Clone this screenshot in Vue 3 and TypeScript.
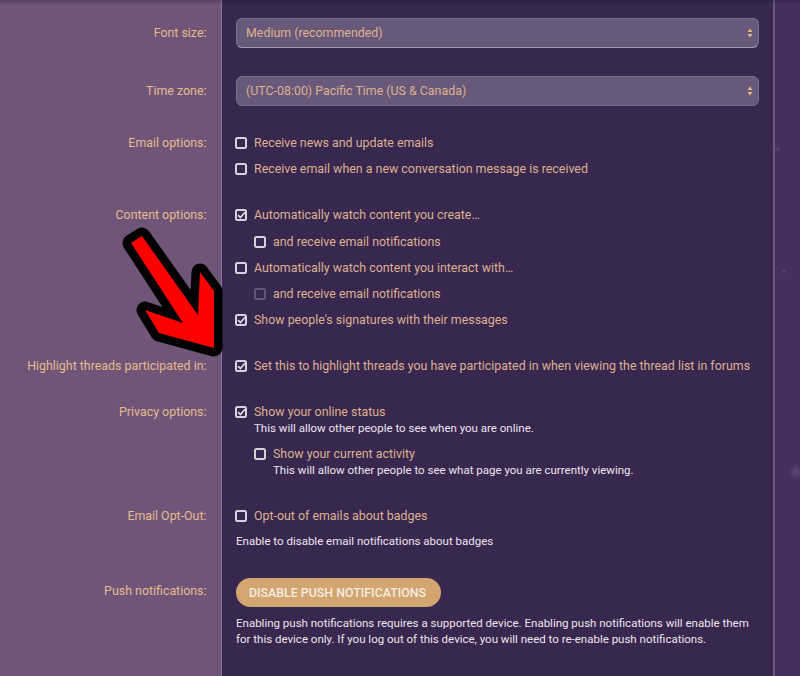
<script setup lang="ts">
interface Choice {
  text: string
  checked?: boolean
  nested?: boolean
  disabled?: boolean
  hint?: string
}
interface Row {
  label: string
  kind: 'select' | 'choices' | 'push'
  value?: string
  choices?: Choice[]
  note?: string
  cls: string
}
const rows: Row[] = [
  { label: 'Font size:', kind: 'select', value: 'Medium (recommended)', cls: 'r-font' },
  { label: 'Time zone:', kind: 'select', value: '(UTC-08:00) Pacific Time (US & Canada)', cls: 'r-zone' },
  {
    label: 'Email options:', kind: 'choices', cls: 'r-email',
    choices: [
      { text: 'Receive news and update emails' },
      { text: 'Receive email when a new conversation message is received' },
    ],
  },
  {
    label: 'Content options:', kind: 'choices', cls: 'r-content',
    choices: [
      { text: 'Automatically watch content you create…', checked: true },
      { text: 'and receive email notifications', nested: true },
      { text: 'Automatically watch content you interact with…' },
      { text: 'and receive email notifications', nested: true, disabled: true },
      { text: "Show people's signatures with their messages", checked: true },
    ],
  },
  {
    label: 'Highlight threads participated in:', kind: 'choices', cls: 'r-high',
    choices: [{ text: 'Set this to highlight threads you have participated in when viewing the thread list in forums', checked: true }],
  },
  {
    label: 'Privacy options:', kind: 'choices', cls: 'r-privacy',
    choices: [
      { text: 'Show your online status', checked: true, hint: 'This will allow other people to see when you are online.' },
      { text: 'Show your current activity', nested: true, hint: 'This will allow other people to see what page you are currently viewing.' },
    ],
  },
  {
    label: 'Email Opt-Out:', kind: 'choices', cls: 'r-opt',
    choices: [{ text: 'Opt-out of emails about badges' }],
    note: 'Enable to disable email notifications about badges',
  },
  {
    label: 'Push notifications:', kind: 'push', cls: 'r-push',
    note: 'Enabling push notifications requires a supported device. Enabling push notifications will enable them for this device only. If you log out of this device, you will need to re-enable push notifications.',
  },
]
</script>

<template>
  <div class="page">
    <form class="form" @submit.prevent>
      <div v-for="row in rows" :key="row.label" class="row" :class="row.cls">
        <div class="label">{{ row.label }}</div>
        <div class="field">
          <div v-if="row.kind === 'select'" class="select">
            <span>{{ row.value }}</span>
            <svg class="updown" width="6" height="10" viewBox="0 0 6 10" aria-hidden="true">
              <path d="M3 0.5 5.6 4H.4zM3 9.5 .4 6h5.2z" fill="#e3b585" />
            </svg>
          </div>
          <template v-if="row.kind === 'choices'">
            <div
              v-for="c in row.choices"
              :key="c.text + c.nested"
              class="choice"
              :class="{ nested: c.nested, disabled: c.disabled }"
            >
              <span class="box">
                <svg v-if="c.checked" width="9" height="8" viewBox="0 0 9 8" aria-hidden="true">
                  <path d="M1 4.2 3.4 6.5 8 1.2" fill="none" stroke="#e4dfe8" stroke-width="1.6" />
                </svg>
              </span>
              <div class="choice-text">
                <div class="choice-label">{{ c.text }}</div>
                <div v-if="c.hint" class="hint">{{ c.hint }}</div>
              </div>
            </div>
          </template>
          <button v-if="row.kind === 'push'" class="btn" type="button">DISABLE PUSH NOTIFICATIONS</button>
          <div v-if="row.note" class="note">{{ row.note }}</div>
        </div>
      </div>
    </form>
    <svg class="arrow" width="120" height="140" viewBox="120 225 120 140" aria-hidden="true">
      <path
        d="M131 243 142 236 198 315 200 272 214 291 214 348 159 333 145 310 183 323Z"
        fill="#000"
        stroke="#000"
        stroke-width="17"
        stroke-linejoin="round"
      />
      <path d="M131 243 142 236 198 315 200 272 214 291 214 348 159 333 145 310 183 323Z" fill="#ff0000" />
    </svg>
    <div class="topshade"></div>
  </div>
</template>

<style>
html, body { margin: 0; background: #43305f; }
</style>

<style scoped>
.page {
  position: relative;
  width: 800px;
  height: 676px;
  overflow: hidden;
  background:
    radial-gradient(circle at 778px 149px, #5a4a72 0, transparent 3px),
    radial-gradient(circle at 784px 271px, #5a4a72 0, transparent 3px),
    radial-gradient(circle at 796px 472px, #5e4d78 0, transparent 8px),
    #43305f;
  font-family: Roboto, "Liberation Sans", sans-serif;
  font-size: 12.4px;
  line-height: 18px;
  color: #dcb290;
}
.form {
  box-sizing: border-box;
  width: 775px;
  height: 676px;
  display: flex;
  flex-direction: column;
  background: #38274f;
  border-right: 2px solid #6d5a84;
}
.row {
  display: grid;
  grid-template-columns: 222px 1fr;
}
.row:last-child { flex: 1; }
.label {
  box-sizing: border-box;
  background: #6f5678;
  border-right: 1px solid #8d769c;
  padding-right: 14.5px;
  text-align: right;
  color: #e6b98f;
}
.field { padding: 0 14px; min-width: 0; }
.select {
  box-sizing: border-box;
  height: 30px;
  display: flex;
  align-items: center;
  justify-content: space-between;
  padding: 0 5px 0 9px;
  background: #68587a;
  border: 1px solid #7d6c90;
  border-radius: 6px;
}
.r-font .select { border-bottom-color: #a898b6; }
.updown { display: block; }
.choice {
  display: flex;
  align-items: flex-start;
  min-height: 18px;
  margin-bottom: 8px;
}
.choice:last-child { margin-bottom: 0; }
.choice.nested { margin-left: 19px; }
.box {
  box-sizing: border-box;
  flex: none;
  width: 12px;
  height: 12px;
  margin: 3px 7px 0 -1px;
  border: 2px solid #d8d2de;
  border-radius: 2.5px;
  display: flex;
  align-items: center;
  justify-content: center;
}
.box svg { flex: none; margin: 0 -1px; }
.disabled .box { border-color: #64547a; }
.hint, .note { color: #ece6ee; font-size: 11.5px; line-height: 16px; }
.hint { margin-top: -1px; }
.btn {
  display: block;
  box-sizing: border-box;
  width: 205px;
  height: 29px;
  padding: 0 2px 0 0;
  border: 0;
  border-radius: 15px;
  background: #d3a671;
  color: #f6ece0;
  font: 500 12.4px/29px Roboto, "Liberation Sans", sans-serif;
}
.r-font .label { padding-top: 24px; }
.r-font .field { padding-top: 18px; padding-bottom: 28px; }
.r-zone .label { padding-top: 6px; }
.r-zone .field { padding-bottom: 28px; }
.r-email .field { padding-bottom: 28px; }
.r-content .field { padding-bottom: 28px; }
.r-content .choice:first-child { margin-bottom: 9px; }
.r-high .field { padding-bottom: 28px; }
.r-privacy .field { padding-bottom: 29px; }
.r-privacy .choice:first-child { margin-bottom: 9px; }
.r-opt .field { padding-bottom: 29px; }
.r-opt .note { margin-top: 8px; }
.r-push .label { padding-top: 4px; }
.r-push .note { margin-top: 8px; }
.arrow {
  position: absolute;
  left: 120px;
  top: 225px;
}
.topshade {
  position: absolute;
  inset: 0 0 auto 0;
  height: 5px;
  background: linear-gradient(rgba(30, 18, 45, 0.3), transparent);
  pointer-events: none;
}
</style>
